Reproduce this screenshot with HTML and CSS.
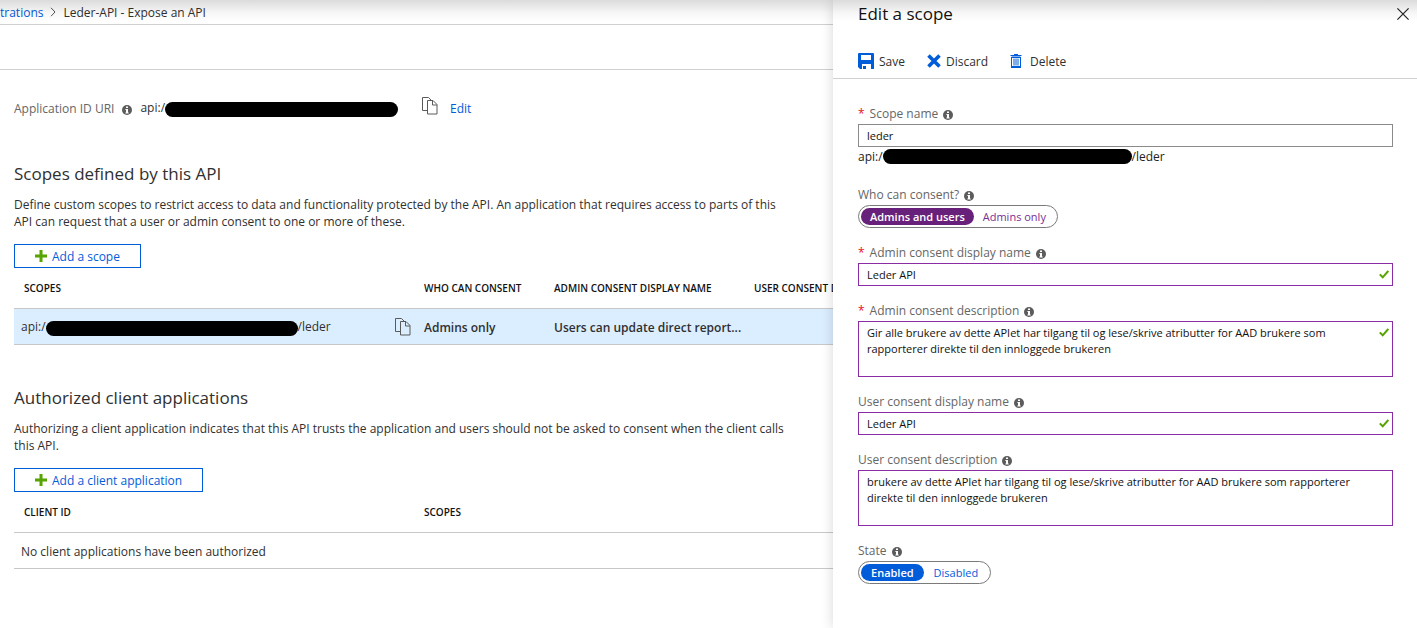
FILE: index.html
```html
<!DOCTYPE html>
<html lang="en">
<head>
<meta charset="utf-8">
<title>Leder-API - Expose an API</title>
<link rel="stylesheet" href="styles.css">
</head>
<body>
<svg class="sprite" aria-hidden="true">
  <symbol id="info" viewBox="0 0 10 10"><circle cx="5" cy="5" r="5" fill="#5c5c5c"/><path d="M4 1.6h2v1.5H4zM3.4 4H6v3.4h.7v1H3.4v-1H4V5h-.6z" fill="#fff"/></symbol>
  <symbol id="copy" viewBox="0 0 16 18"><path d="M5 13.500H.5V.5h6l3 3M5.500 3.500h5.500l4 4v9.500H5.500zM10.500 3.500v4.500h4.500" fill="none" stroke="#5a5a5a"/></symbol>
  <symbol id="plus" viewBox="0 0 12 12"><path d="M4.500 0h3v4.500H12v3H7.500V12h-3V7.500H0v-3h4.500z" fill="#57a300"/></symbol>
  <symbol id="check" viewBox="0 0 10 9"><path d="M.8 4.400 3.700 7.300 9.300 1" fill="none" stroke="#57a300" stroke-width="2"/></symbol>
</svg>
<div class="portal">
  <main class="blade">
    <nav class="breadcrumb" aria-label="Breadcrumb">
      <a href="#">trations</a>
      <svg width="6" height="10" viewBox="0 0 6 10"><path d="M1 .8 5 5 1 9.200" fill="none" stroke="#555"/></svg>
      <span>Leder-API - Expose an API</span>
    </nav>
    <div class="commands"></div>
    <div class="content">
      <div class="uri">
        <span class="uri-label">Application ID URI</span>
        <svg class="info"><use href="#info"/></svg>
        <span class="uri-value">api:/<span class="redacted redacted-uri"></span></span>
        <button class="icon-button" aria-label="Copy"><svg class="copy"><use href="#copy"/></svg></button>
        <a href="#">Edit</a>
      </div>
      <section>
        <h2>Scopes defined by this API</h2>
        <p>Define custom scopes to restrict access to data and functionality protected by the API. An application that requires access to parts of this API can request that a user or admin consent to one or more of these.</p>
        <button class="add"><svg class="plus"><use href="#plus"/></svg>Add a scope</button>
        <table class="scopes">
          <colgroup><col class="col-id"><col class="col-who"><col class="col-name"><col class="col-name"></colgroup>
          <thead><tr><th>SCOPES</th><th>WHO CAN CONSENT</th><th>ADMIN CONSENT DISPLAY NAME</th><th>USER CONSENT DISPLAY NAME</th></tr></thead>
          <tbody><tr class="selected">
            <td><div class="scope-cell"><span>api:/<span class="redacted redacted-scope"></span>/leder</span><button class="icon-button" aria-label="Copy"><svg class="copy"><use href="#copy"/></svg></button></div></td>
            <td>Admins only</td><td>Users can update direct report...</td><td></td>
          </tr></tbody>
        </table>
      </section>
      <section>
        <h2>Authorized client applications</h2>
        <p>Authorizing a client application indicates that this API trusts the application and users should not be asked to consent when the client calls this API.</p>
        <button class="add"><svg class="plus"><use href="#plus"/></svg>Add a client application</button>
        <table class="clients">
          <colgroup><col class="col-id"><col></colgroup>
          <thead><tr><th>CLIENT ID</th><th>SCOPES</th></tr></thead>
          <tbody><tr><td colspan="2">No client applications have been authorized</td></tr></tbody>
        </table>
      </section>
    </div>
  </main>
  <aside class="panel">
    <header>
      <h1>Edit a scope</h1>
      <button class="icon-button" aria-label="Close"><svg width="12" height="12" viewBox="0 0 12 12"><path d="M.4.4l11.200 11.200M11.600.4.4 11.600" fill="none" stroke="#222" stroke-width="1.200"/></svg></button>
    </header>
    <div class="toolbar">
      <button class="tool"><svg width="16" height="16" viewBox="0 0 16 16"><path d="M0 1q0-1 1-1h14q1 0 1 1v15h-3v-5H4v5H2l-2-2zM3 2v5h10V2zM5 13h3v3H5z" fill="#015cda" fill-rule="evenodd"/></svg>Save</button>
      <button class="tool"><svg width="14" height="14" viewBox="0 0 14 14"><path d="M1.500 1.500l11 11M12.500 1.500l-11 11" fill="none" stroke="#015cda" stroke-width="3.600"/></svg>Discard</button>
      <button class="tool tool-delete"><svg width="12" height="14" viewBox="0 0 12 14"><path d="M.5 1.500h11M4 .5h4M1.500 3v10h9V3zM4 4.500v7M6 4.500v7M8 4.500v7" fill="none" stroke="#015cda"/><path d="M1 3h10v1H1zM1 12h10v2H1z" fill="#015cda"/></svg>Delete</button>
    </div>
    <form>
      <div class="field">
        <div class="label"><b>*</b><label for="scope">Scope name</label><svg class="info"><use href="#info"/></svg></div>
        <input class="text" id="scope" value="leder">
        <div class="full-uri">api:/<span class="redacted redacted-full"></span>/leder</div>
      </div>
      <div class="field">
        <div class="label" id="who">Who can consent?<svg class="info"><use href="#info"/></svg></div>
        <div class="toggle purple" role="radiogroup" aria-labelledby="who">
          <label><input type="radio" name="who" checked><span>Admins and users</span></label>
          <label><input type="radio" name="who"><span>Admins only</span></label>
        </div>
      </div>
      <div class="field">
        <div class="label"><b>*</b><label for="adn">Admin consent display name</label><svg class="info"><use href="#info"/></svg></div>
        <div class="box"><input class="text edited" id="adn" value="Leder API"><svg class="check"><use href="#check"/></svg></div>
      </div>
      <div class="field">
        <div class="label"><b>*</b><label for="ad">Admin consent description</label><svg class="info"><use href="#info"/></svg></div>
        <div class="box"><textarea class="text edited" id="ad">Gir alle brukere av dette APIet har tilgang til og lese/skrive atributter for AAD brukere som rapporterer direkte til den innloggede brukeren</textarea><svg class="check"><use href="#check"/></svg></div>
      </div>
      <div class="field">
        <div class="label"><label for="udn">User consent display name</label><svg class="info"><use href="#info"/></svg></div>
        <div class="box"><input class="text edited" id="udn" value="Leder API"><svg class="check"><use href="#check"/></svg></div>
      </div>
      <div class="field">
        <div class="label"><label for="ud">User consent description</label><svg class="info"><use href="#info"/></svg></div>
        <textarea class="text edited" id="ud">brukere av dette APIet har tilgang til og lese/skrive atributter for AAD brukere som rapporterer direkte til den innloggede brukeren</textarea>
      </div>
      <div class="field">
        <div class="label" id="state">State<svg class="info"><use href="#info"/></svg></div>
        <div class="toggle blue" role="radiogroup" aria-labelledby="state">
          <label><input type="radio" name="state" checked><span>Enabled</span></label>
          <label><input type="radio" name="state"><span>Disabled</span></label>
        </div>
      </div>
    </form>
  </aside>
  <div class="top-shadow"></div>
</div>
</body>
</html>
```
FILE: styles.css
```css
* { box-sizing: border-box; }
body {
  margin: 0;
  font: 12px/17px "Segoe UI", "Open Sans", "Noto Sans", sans-serif;
  color: #303030;
  background: #fff;
}
h1, h2, p { margin: 0; font-weight: 400; }
a { color: #015cda; text-decoration: none; }
button, input, textarea { font: inherit; color: inherit; }
button { border: 0; padding: 0; background: none; }
svg { display: block; flex: none; }
.sprite { position: absolute; width: 0; height: 0; }
.info { width: 10px; height: 10px; margin-top: 3px; }
.copy { width: 16px; height: 18px; }
.plus { width: 12px; height: 12px; }
.redacted {
  display: inline-block;
  height: 15px;
  border-radius: 8px;
  background: #000;
  vertical-align: -5px;
}
.redacted-uri { width: 233px; }
.redacted-scope { width: 252px; }
.redacted-full { width: 249px; vertical-align: -3px; }

.portal {
  position: relative;
  display: grid;
  grid-template-columns: minmax(0, 1fr) 584px;
  min-height: 100vh;
}
.top-shadow {
  position: absolute;
  inset: 0 0 auto;
  height: 22px;
  background: linear-gradient(rgba(0, 0, 0, .14), rgba(0, 0, 0, .03) 60%, transparent);
  pointer-events: none;
}

.blade { overflow: hidden; }
.breadcrumb {
  display: flex;
  align-items: center;
  gap: 7px;
  height: 25px;
  border-bottom: 1px solid #d0d0d0;
}
.commands { height: 45px; border-bottom: 1px solid #d0d0d0; }
.content { padding: 26px 0 0 14px; }
.uri { display: flex; align-items: center; height: 24px; margin-bottom: 42px; }
.uri-label { color: #666; }
.uri .info { margin-left: 8px; margin-right: 8px; }
.uri .icon-button { margin: 0 12px 4px 24px; }
section { margin-bottom: 41px; }
h2 { font-size: 17px; line-height: 24px; }
p { max-width: 780px; margin: 10px 0 14px; }
.add {
  display: flex;
  align-items: center;
  gap: 5px;
  height: 24px;
  padding: 0 20px;
  border: 1px solid #015cda;
  color: #015cda;
  font-weight: 500;
}
table { border-collapse: separate; border-spacing: 0; table-layout: fixed; }
.scopes { width: 930px; }
.clients { width: 100%; }
.col-id { width: 400px; }
.col-who { width: 130px; }
.col-name { width: 200px; }
th, td { border-bottom: 1px solid #c8c8c8; }
th {
  height: 41px;
  padding: 0 0 0 10px;
  font-size: 10px;
  font-weight: 600;
  text-align: left;
  white-space: nowrap;
  color: #111;
}
td {
  height: 36px;
  padding: 1px 0 0 10px;
  font-weight: 600;
}
td:first-child { padding-left: 7px; font-weight: 400; }
.selected { background: #dbeeff; }
.scope-cell { display: flex; align-items: center; justify-content: space-between; padding-right: 3px; }

.panel { position: relative; background: #fff; box-shadow: 0 0 12px rgba(0, 0, 0, .16); }
.panel header {
  display: flex;
  align-items: center;
  justify-content: space-between;
  height: 28px;
  padding: 0 8px 0 25px;
}
h1 { font-size: 17px; line-height: 24px; font-weight: 500; color: #111; }
.toolbar {
  display: flex;
  align-items: center;
  gap: 22px;
  height: 51px;
  padding: 16px 25px 0;
  border-bottom: 1px solid #d0d0d0;
}
.tool { display: flex; align-items: center; gap: 5px; }
.tool-delete { gap: 8px; }
form { display: grid; gap: 17px; padding: 27px 24px 20px 25px; }
.label { display: flex; align-items: center; gap: 5px; height: 18px; padding-bottom: 3px; color: #666; }
.label b { color: #e81123; font-weight: 400; }
.box { position: relative; }
.text {
  display: block;
  width: 100%;
  height: 23px;
  padding: 0 8px;
  border: 1px solid #8a8a8a;
  border-radius: 0;
  background: #fff;
  font-size: 11px;
  line-height: 16px;
  outline: 0;
  color: #111;
}
textarea.text { height: 56px; padding: 3px 20px 3px 8px; resize: none; overflow: hidden; }
.edited { border-color: #8a2da5; }
.check { position: absolute; top: 7px; right: 4px; width: 10px; height: 9px; }
.full-uri { height: 23px; line-height: 20px; color: #222; }
.toggle {
  display: flex;
  width: max-content;
  height: 23px;
  padding: 2px;
  border: 1px solid #7a7a7a;
  border-radius: 12px;
  font-size: 11px;
}
.toggle input { position: absolute; opacity: 0; margin: 0; }
.toggle span { display: block; height: 17px; line-height: 17px; padding: 0 9px; border-radius: 9px; }
.toggle :checked + span { color: #fff; font-weight: 600; }
.purple { color: #7a2f94; }
.purple :checked + span { background: #68217a; }
.blue { color: #015cda; }
.blue span { padding: 0 10px; }
.blue :checked + span { background: #015cda; }
```
